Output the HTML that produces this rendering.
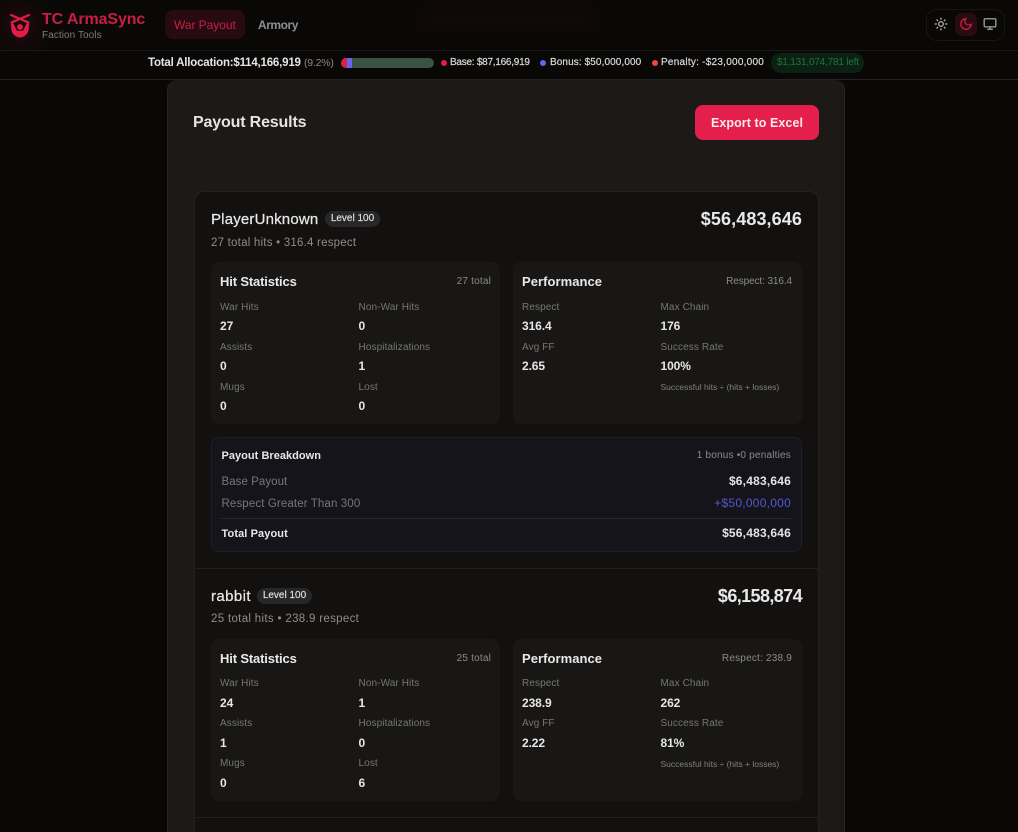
<!DOCTYPE html>
<html lang="en"><head><meta charset="utf-8"><title>TC ArmaSync</title>
<style>
html,body{margin:0;padding:0;width:1018px;height:832px;overflow:hidden;background:#090807}
body{position:relative;font-family:"Liberation Sans",sans-serif;color:#e7e5e4}
.a,.t,.r{position:absolute}
.t,.r{white-space:nowrap;line-height:14px;height:14px}
.r{text-align:right}
.panel{background:#181716;border-radius:8px}
.ti{font-size:13px;font-weight:700;color:#e8e8e8;letter-spacing:.05px}
.hs{letter-spacing:-.15px}
.sm{font-size:10px;color:#8b8b8b;letter-spacing:.2px}
.lb{font-size:10px;color:#767676;letter-spacing:.1px}
.v{font-size:12px;font-weight:700;color:#e6e6e6;letter-spacing:-.1px}
.lg{font-size:10px;color:#d9d9d9;font-weight:400;-webkit-text-stroke:.2px #d9d9d9}
.dot{position:absolute;width:6px;height:6px;border-radius:50%;top:60px}
.name{font-size:15px;color:#e8e8e8;letter-spacing:.18px;-webkit-text-stroke:.25px #e8e8e8}
.badge{position:absolute;background:#27272a;border-radius:8px;height:16px;line-height:16px;font-size:10px;color:#e0e0e0;text-align:center;-webkit-text-stroke:.15px #e0e0e0}
.amt{font-size:18px;font-weight:700;color:#e8e8e8;letter-spacing:.1px}
.sub{font-size:11.5px;color:#8d8d8d;letter-spacing:.22px}
.b{font-size:11.5px;color:#777;letter-spacing:.12px}
.bv{font-size:12px;font-weight:700;color:#e4e4e4;letter-spacing:.2px}
svg{position:absolute;display:block}
</style></head><body>

<div class="a" style="left:0;top:0;width:60px;height:50px;background:radial-gradient(circle at 20px 25px,#220a10 0,#120809 45%,transparent 75%)"></div>
<div class="a" style="left:420px;top:5px;width:175px;height:28px;background:#1d0a0a;filter:blur(6px);opacity:.4"></div>

<div class="a" style="left:0;top:50px;width:1018px;height:1px;background:#181818"></div>
<div class="a" style="left:0;top:79px;width:1018px;height:1px;background:#232323"></div>

<svg style="left:8px;top:13px" width="24" height="25" viewBox="0 0 24 25">
 <g stroke="#e11d48" stroke-linecap="round" fill="none">
  <path d="M3 2 L20.500 9.500" stroke-width="2.200"/>
  <path d="M21 2 L3.500 9.500" stroke-width="2.200"/>
 </g>
 <circle cx="12" cy="14" r="2.900" fill="#e11d48"/>
 <path fill="#e11d48" d="M3 11 L5 9.800 L9 17.800 L15 17.800 L19 9.800 L21 11 L20.600 17 C20 21 16 24.500 12 24.500 C8 24.500 4 21 3.400 17 Z"/>
</svg>
<div class="t" style="left:42px;top:12px;height:16px;line-height:16px;font-size:16px;font-weight:700;color:#c81e45;letter-spacing:-.1px">TC ArmaSync</div>
<div class="t" style="left:42px;top:29px;font-size:10px;color:#7d7d7d;letter-spacing:.07px">Faction Tools</div>

<div class="a" style="left:165px;top:10px;width:80px;height:29px;border-radius:8px;background:#280b12"></div>
<div class="t" style="left:174px;top:18px;font-size:12px;color:#c81e45;letter-spacing:-.05px">War Payout</div>
<div class="t" style="left:258px;top:18px;font-size:12px;font-weight:700;color:#8e8e93;letter-spacing:-.45px">Armory</div>

<div class="a" style="left:926px;top:9px;width:77px;height:30px;border:1px solid #161616;border-radius:11px"></div>
<div class="a" style="left:955px;top:13px;width:22px;height:23px;border-radius:7px;background:#2a0b12"></div>
<svg style="left:934px;top:17px" width="14" height="14" viewBox="0 0 24 24" fill="none" stroke="#c4c4c4" stroke-width="2" stroke-linecap="round" stroke-linejoin="round"><circle cx="12" cy="12" r="4"/><path d="M12 2v2M12 20v2M4.930 4.930l1.410 1.410M17.660 17.660l1.410 1.410M2 12h2M20 12h2M6.340 17.660l-1.410 1.410M19.070 4.930l-1.410 1.410"/></svg>
<svg style="left:959px;top:17px" width="14" height="14" viewBox="0 0 24 24" fill="none" stroke="#e11d48" stroke-width="2" stroke-linecap="round" stroke-linejoin="round"><path d="M12 3a6 6 0 0 0 9 9 9 9 0 1 1-9-9Z"/></svg>
<svg style="left:983px;top:17px" width="14" height="14" viewBox="0 0 24 24" fill="none" stroke="#a3a3a3" stroke-width="2.200" stroke-linecap="round" stroke-linejoin="round"><rect x="2" y="3" width="20" height="14" rx="2"/><path d="M8 21h8M12 17v4"/></svg>

<div class="t" style="left:148px;top:56px;font-size:11.5px;font-weight:700;color:#e5e5e5;letter-spacing:-.2px">Total Allocation:$114,166,919</div>
<div class="t" style="left:304px;top:56px;font-size:10.5px;color:#8a8a8a;letter-spacing:-.2px">(9.2%)</div>
<div class="a" style="left:341px;top:58px;width:93px;height:10px;border-radius:5px;background:#3a5244;overflow:hidden">
 <div class="a" style="left:0;top:0;width:6px;height:10px;background:#e11d48"></div>
 <div class="a" style="left:6px;top:0;width:5px;height:10px;background:#6366f1"></div>
</div>
<div class="dot" style="left:441px;background:#e11d48"></div>
<div class="t lg" style="left:450px;top:56px;letter-spacing:-.25px">Base: $87,166,919</div>
<div class="dot" style="left:540px;background:#6366f1"></div>
<div class="t lg" style="left:550px;top:56px;letter-spacing:.1px">Bonus: $50,000,000</div>
<div class="dot" style="left:652px;background:#ef4444"></div>
<div class="t lg" style="left:661px;top:56px;letter-spacing:.25px">Penalty: -$23,000,000</div>
<div class="a" style="left:771px;top:53px;width:93px;height:20px;border-radius:10px;background:#0c2014"></div>
<div class="t" style="left:777px;top:56px;font-size:10px;color:#18793d;letter-spacing:-.2px">$1,131,074,781 left</div>

<div class="a" style="left:167px;top:80px;width:676px;height:760px;background:#1c1917;border:1px solid #272523;border-top:0;border-top-left-radius:10px;border-top-right-radius:10px"></div>
<div class="t" style="left:193px;top:114px;height:18px;line-height:18px;font-size:16px;font-weight:700;color:#e7e5e4;letter-spacing:-.16px">Payout Results</div>
<div class="a" style="left:695px;top:105px;width:124px;height:35px;border-radius:8px;background:#e51f4c"></div>
<div class="t" style="left:695px;width:124px;text-align:center;top:116px;font-size:12.5px;font-weight:700;color:#fde8ec;letter-spacing:.07px">Export to Excel</div>

<div class="a" style="left:194px;top:191px;width:623px;height:660px;background:#13110f;border:1px solid #222223;border-radius:10px"></div>

<!-- Player 1 -->
<div class="t name" style="left:211px;top:213px">PlayerUnknown</div>
<div class="badge" style="left:325px;top:211px;width:55px">Level 100</div>
<div class="r amt" style="right:216px;top:212px">$56,483,646</div>
<div class="t sub" style="left:211px;top:236px">27 total hits • 316.4 respect</div>

<div class="a panel" style="left:211px;top:262px;width:289px;height:162px"></div>
<div class="a panel" style="left:513px;top:262px;width:289px;height:162px"></div>
<div class="t ti hs" style="left:220px;top:275px">Hit Statistics</div>
<div class="r sm" style="right:527px;top:275px">27 total</div>
<div class="t lb" style="left:220px;top:301px">War Hits</div><div class="t lb" style="left:358.500px;top:301px">Non-War Hits</div>
<div class="t v" style="left:220px;top:319px">27</div><div class="t v" style="left:358.500px;top:319px">0</div>
<div class="t lb" style="left:220px;top:341px">Assists</div><div class="t lb" style="left:358.500px;top:341px">Hospitalizations</div>
<div class="t v" style="left:220px;top:359px">0</div><div class="t v" style="left:358.500px;top:359px">1</div>
<div class="t lb" style="left:220px;top:381px">Mugs</div><div class="t lb" style="left:358.500px;top:381px">Lost</div>
<div class="t v" style="left:220px;top:399px">0</div><div class="t v" style="left:358.500px;top:399px">0</div>

<div class="t ti" style="left:522px;top:275px">Performance</div>
<div class="r sm" style="right:226px;top:275px;letter-spacing:-.1px">Respect: 316.4</div>
<div class="t lb" style="left:522px;top:301px">Respect</div><div class="t lb" style="left:660.500px;top:301px">Max Chain</div>
<div class="t v" style="left:522px;top:319px">316.4</div><div class="t v" style="left:660.500px;top:319px">176</div>
<div class="t lb" style="left:522px;top:341px">Avg FF</div><div class="t lb" style="left:660.500px;top:341px">Success Rate</div>
<div class="t v" style="left:522px;top:359px">2.65</div><div class="t v" style="left:660.500px;top:359px">100%</div>
<div class="t" style="left:660.500px;top:380px;font-size:8.5px;color:#808080">Successful hits ÷ (hits + losses)</div>

<div class="a" style="left:211px;top:437px;width:589px;height:113px;background:#15141b;border:1px solid #1f1e2b;border-radius:8px"></div>
<div class="t" style="left:221.500px;top:449px;font-size:11px;font-weight:700;color:#e8e8e8;letter-spacing:.03px">Payout Breakdown</div>
<div class="r sm" style="right:227px;top:449px">1 bonus •0 penalties</div>
<div class="t b" style="left:221.500px;top:475px;letter-spacing:.05px">Base Payout</div>
<div class="r bv" style="right:227px;top:474px">$6,483,646</div>
<div class="t b" style="left:221.500px;top:497px">Respect Greater Than 300</div>
<div class="r" style="right:227px;top:496px;font-size:12px;color:#5458cf;letter-spacing:.25px">+$50,000,000</div>
<div class="a" style="left:221px;top:518px;width:570px;height:1px;background:#29282f"></div>
<div class="t" style="left:221.500px;top:527px;font-size:11px;font-weight:700;color:#e8e8e8;letter-spacing:.1px">Total Payout</div>
<div class="r bv" style="right:227px;top:526px">$56,483,646</div>

<div class="a" style="left:195px;top:568px;width:623px;height:1px;background:#21201f"></div>

<!-- Player 2 -->
<div class="t name" style="left:211px;top:590px;letter-spacing:.4px">rabbit</div>
<div class="badge" style="left:257px;top:588px;width:55px">Level 100</div>
<div class="r amt" style="right:216px;top:589px;letter-spacing:-.6px">$6,158,874</div>
<div class="t sub" style="left:211px;top:612px;letter-spacing:.32px">25 total hits • 238.9 respect</div>

<div class="a panel" style="left:211px;top:639px;width:289px;height:162px"></div>
<div class="a panel" style="left:513px;top:639px;width:289px;height:162px"></div>
<div class="t ti hs" style="left:220px;top:652px">Hit Statistics</div>
<div class="r sm" style="right:527px;top:652px">25 total</div>
<div class="t lb" style="left:220px;top:677px">War Hits</div><div class="t lb" style="left:358.500px;top:677px">Non-War Hits</div>
<div class="t v" style="left:220px;top:696px">24</div><div class="t v" style="left:358.500px;top:696px">1</div>
<div class="t lb" style="left:220px;top:717px">Assists</div><div class="t lb" style="left:358.500px;top:717px">Hospitalizations</div>
<div class="t v" style="left:220px;top:736px">1</div><div class="t v" style="left:358.500px;top:736px">0</div>
<div class="t lb" style="left:220px;top:757px">Mugs</div><div class="t lb" style="left:358.500px;top:757px">Lost</div>
<div class="t v" style="left:220px;top:776px">0</div><div class="t v" style="left:358.500px;top:776px">6</div>

<div class="t ti" style="left:522px;top:652px">Performance</div>
<div class="r sm" style="right:226px;top:652px">Respect: 238.9</div>
<div class="t lb" style="left:522px;top:677px">Respect</div><div class="t lb" style="left:660.500px;top:677px">Max Chain</div>
<div class="t v" style="left:522px;top:696px">238.9</div><div class="t v" style="left:660.500px;top:696px">262</div>
<div class="t lb" style="left:522px;top:717px">Avg FF</div><div class="t lb" style="left:660.500px;top:717px">Success Rate</div>
<div class="t v" style="left:522px;top:736px">2.22</div><div class="t v" style="left:660.500px;top:736px">81%</div>
<div class="t" style="left:660.500px;top:757px;font-size:8.5px;color:#808080">Successful hits ÷ (hits + losses)</div>

<div class="a" style="left:195px;top:817px;width:623px;height:1px;background:#21201f"></div>

</body></html>
